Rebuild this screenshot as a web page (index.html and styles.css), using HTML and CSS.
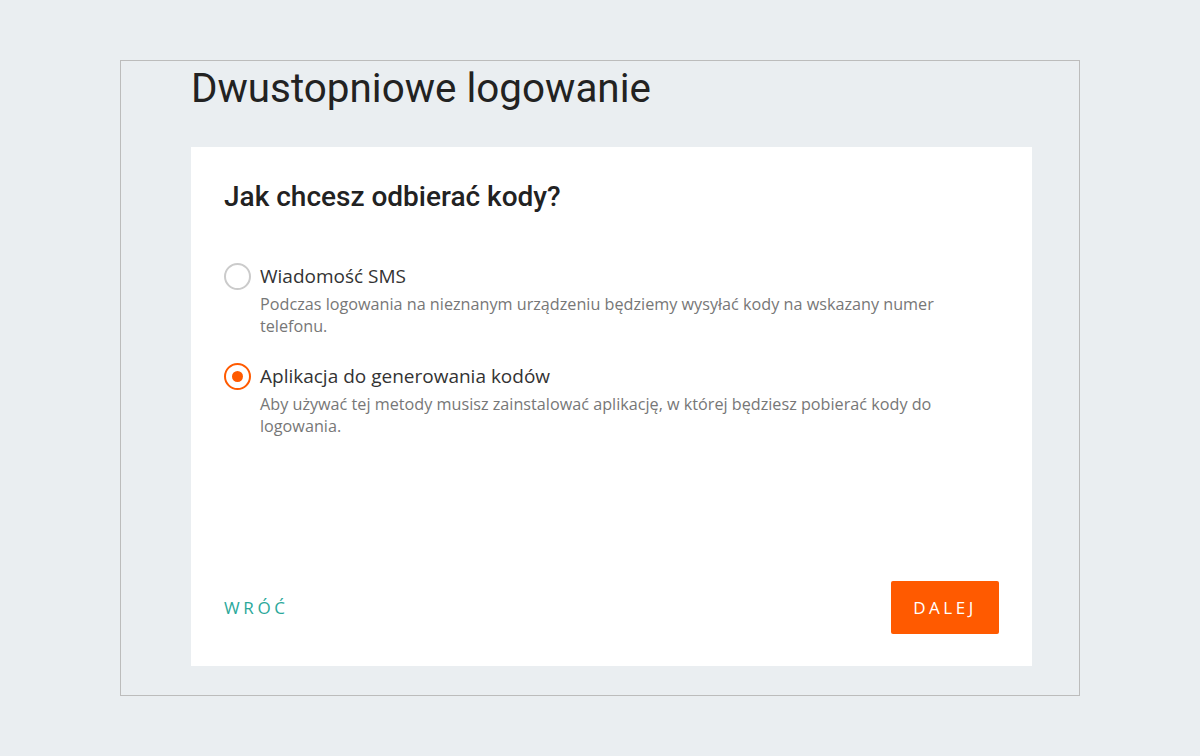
FILE: index.html
```html
<!DOCTYPE html>
<html lang="pl">
<head>
  <meta charset="UTF-8" />
  <meta name="viewport" content="width=device-width, initial-scale=1.0"/>
  <title>Dwustopniowe logowanie</title>
  <link rel="stylesheet" href="styles.css">
</head>
<body>
  <div class="ramka">
    <h1 class="naglowek">Dwustopniowe logowanie</h1>

    <div class="karta">
      <h2 class="pytanie">Jak chcesz odbierać kody?</h2>

      <div class="opcje">
        <label class="opcja">
          <span class="radio"></span>
          <span class="tekst">
            <span class="etykieta">Wiadomość SMS</span>
            <span class="opis">Podczas logowania na nieznanym urządzeniu będziemy wysyłać kody na wskazany numer telefonu.</span>
          </span>
        </label>

        <label class="opcja">
          <span class="radio zaznaczone"></span>
          <span class="tekst">
            <span class="etykieta">Aplikacja do generowania kodów</span>
            <span class="opis">Aby używać tej metody musisz zainstalować aplikację, w której będziesz pobierać kody do logowania.</span>
          </span>
        </label>
      </div>

      <div class="stopka">
        <button class="wroc">WRÓĆ</button>
        <button class="dalej">DALEJ</button>
      </div>
    </div>
  </div>
</body>
</html>
```

FILE: styles.css
```css
* {
  margin: 0;
  padding: 0;
  box-sizing: border-box;
}

body {
  background: #eaeef1;
  font-family: 'Open Sans', sans-serif;
  height: 100vh;
  display: flex;
  align-items: center;
  justify-content: center;
}

.ramka {
  width: 960px;
  height: 636px;
  border: 1px solid #bcbcbc;
  padding: 0 47px 29px 70px;
  display: flex;
  flex-direction: column;
}

.naglowek {
  font-family: 'Roboto', sans-serif;
  font-weight: 400;
  font-size: 40.4px;
  color: #222;
  line-height: 56px;
  margin: 0 0 30px 0;
}

.karta {
  flex: 1;
  background: #fff;
  padding: 32px 33px 32px 33px;
  display: flex;
  flex-direction: column;
}

.pytanie {
  font-family: 'Roboto', sans-serif;
  font-weight: 500;
  font-size: 28px;
  color: #222;
  line-height: 36px;
}

.opcje {
  margin-top: 48px;
  display: flex;
  flex-direction: column;
  gap: 26px;
}

.opcja {
  display: flex;
  align-items: flex-start;
  cursor: pointer;
}

.radio {
  width: 27px;
  height: 27px;
  border-radius: 50%;
  border: 2px solid #cbcbcb;
  margin-right: 9px;
  flex-shrink: 0;
  display: flex;
  align-items: center;
  justify-content: center;
}

.radio.zaznaczone {
  border-color: #ff5a00;
}

.radio.zaznaczone::after {
  content: '';
  width: 11px;
  height: 11px;
  border-radius: 50%;
  background: #ff5a00;
}

.tekst {
  display: flex;
  flex-direction: column;
}

.etykieta {
  font-size: 19px;
  color: #333;
  line-height: 27px;
}

.opis {
  font-size: 16.2px;
  color: #777;
  line-height: 22px;
  margin-top: 3px;
  max-width: 700px;
}

.stopka {
  margin-top: auto;
  display: flex;
  align-items: center;
  justify-content: space-between;
}

.wroc {
  background: none;
  border: none;
  font-family: 'Open Sans', sans-serif;
  font-size: 17px;
  letter-spacing: 3.6px;
  color: #2aa89a;
  cursor: pointer;
}

.dalej {
  background: #ff5a00;
  border: none;
  border-radius: 2px;
  width: 108px;
  height: 53px;
  font-family: 'Open Sans', sans-serif;
  font-size: 17px;
  letter-spacing: 3.5px;
  color: #fff;
  cursor: pointer;
}
```
